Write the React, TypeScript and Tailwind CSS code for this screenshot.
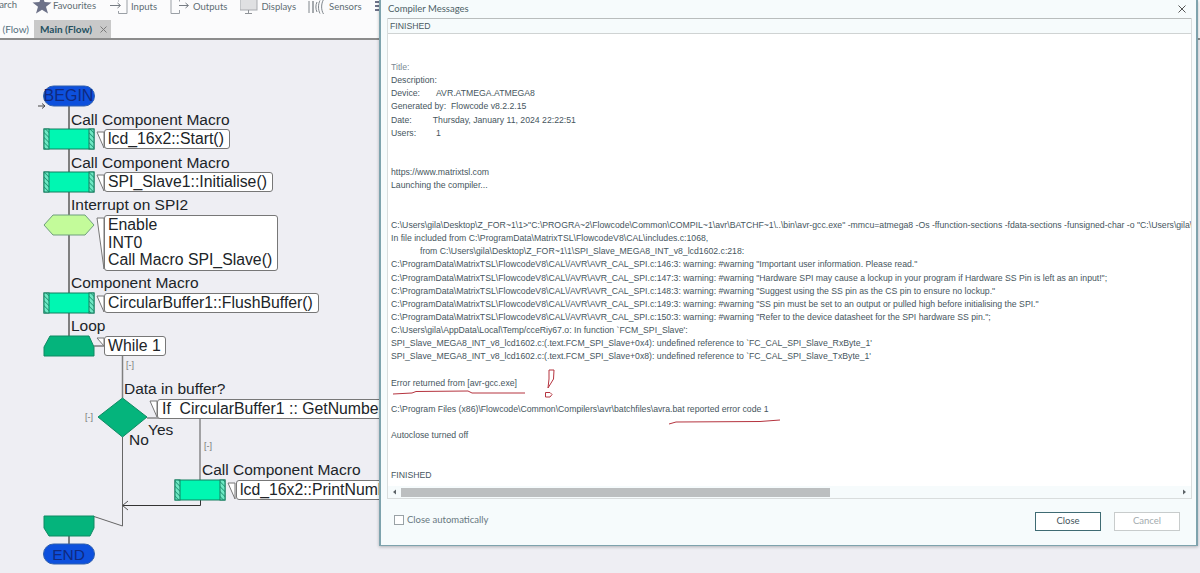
const messageLines = [
  null,
  null,
  "https://www.matrixtsl.com",
  "Launching the compiler...",
  null,
  null,
  'C:\\Users\\gila\\Desktop\\Z_FOR~1\\1>"C:\\PROGRA~2\\Flowcode\\Common\\COMPIL~1\\avr\\BATCHF~1\\..\\bin\\avr-gcc.exe" -mmcu=atmega8 -Os -ffunction-sections -fdata-sections -funsigned-char -o "C:\\Users\\gila\\Desktop\\Z_FOR~1\\1\\SPI_Slave.o"',
  "In file included from C:\\ProgramData\\MatrixTSL\\FlowcodeV8\\CAL\\includes.c:1068,",
  "            from C:\\Users\\gila\\Desktop\\Z_FOR~1\\1\\SPI_Slave_MEGA8_INT_v8_lcd1602.c:218:",
  'C:\\ProgramData\\MatrixTSL\\FlowcodeV8\\CAL\\/AVR\\AVR_CAL_SPI.c:146:3: warning: #warning "Important user information. Please read."',
  'C:\\ProgramData\\MatrixTSL\\FlowcodeV8\\CAL\\/AVR\\AVR_CAL_SPI.c:147:3: warning: #warning "Hardware SPI may cause a lockup in your program if Hardware SS Pin is left as an input!";',
  'C:\\ProgramData\\MatrixTSL\\FlowcodeV8\\CAL\\/AVR\\AVR_CAL_SPI.c:148:3: warning: #warning "Suggest using the SS pin as the CS pin to ensure no lockup."',
  'C:\\ProgramData\\MatrixTSL\\FlowcodeV8\\CAL\\/AVR\\AVR_CAL_SPI.c:149:3: warning: #warning "SS pin must be set to an output or pulled high before initialising the SPI."',
  'C:\\ProgramData\\MatrixTSL\\FlowcodeV8\\CAL\\/AVR\\AVR_CAL_SPI.c:150:3: warning: #warning "Refer to the device datasheet for the SPI hardware SS pin.";',
  "C:\\Users\\gila\\AppData\\Local\\Temp/cceRiy67.o: In function `FCM_SPI_Slave':",
  "SPI_Slave_MEGA8_INT_v8_lcd1602.c:(.text.FCM_SPI_Slave+0x4): undefined reference to `FC_CAL_SPI_Slave_RxByte_1'",
  "SPI_Slave_MEGA8_INT_v8_lcd1602.c:(.text.FCM_SPI_Slave+0x8): undefined reference to `FC_CAL_SPI_Slave_TxByte_1'",
  null,
  "Error returned from [avr-gcc.exe]",
  null,
  "C:\\Program Files (x86)\\Flowcode\\Common\\Compilers\\avr\\batchfiles\\avra.bat reported error code 1",
  null,
  "Autoclose turned off",
  null,
  null,
  "FINISHED",
];

function ToolbarItem({ icon, label, tight }: { icon: React.ReactNode; label: string; tight?: boolean }) {
  return (
    <div className={`flex shrink-0 items-center ${tight ? "gap-[1px]" : "gap-[3px]"}`}>
      {icon}
      <span className="-mt-[2px] text-[9.5px] leading-none text-[#5e6d73]">{label}</span>
    </div>
  );
}

function Toolbar() {
  return (
    <div className="flex h-[20px] shrink-0 items-start overflow-hidden bg-[#fbfbfc] font-['Lato',sans-serif]">
      <span className="-ml-[11px] mr-[15px] text-[9.5px] leading-[10px] text-[#5e6d73]">Search</span>
      <ToolbarItem
        tight
        label="Favourites"
        icon={
          <svg width="20" height="14" viewBox="0 0 20 14">
            <path d="M10 -5 L12.6 2 L19.5 2.4 L14 6.8 L16 13.5 L10 9.8 L4 13.5 L6 6.8 L.5 2.4 L7.4 2 Z" fill="#6d7289" />
          </svg>
        }
      />
      <div className="w-[14px] shrink-0" />
      <ToolbarItem
        label="Inputs"
        icon={
          <svg width="18" height="15" viewBox="0 0 18 15" fill="none" stroke="#9a9fa5">
            <path d="M8.5 .5V1.5M17 -1V13.5H8.5V11" />
            <path d="M0 5.5H10M7.5 3L10.5 5.5L7.5 8" stroke="#777d84" />
          </svg>
        }
      />
      <div className="w-[13px] shrink-0" />
      <ToolbarItem
        label="Outputs"
        icon={
          <svg width="20" height="15" viewBox="0 0 20 15" fill="none" stroke="#9a9fa5">
            <path d="M1 -1V13.5H9.5V10M9.5 -1V1.5" />
            <path d="M9 5.5H18M15.5 3L18.5 5.5L15.5 8" stroke="#777d84" />
          </svg>
        }
      />
      <div className="w-[13px] shrink-0" />
      <ToolbarItem
        label="Displays"
        icon={
          <svg width="18" height="15" viewBox="0 0 18 15">
            <rect x="0" y="-2" width="17" height="12" fill="#dfe0e2" stroke="#a8abaf" />
            <path d="M8.5 10V13M5 13.5H12" stroke="#8f9398" fill="none" />
          </svg>
        }
      />
      <div className="w-[12px] shrink-0" />
      <ToolbarItem
        label="Sensors"
        icon={
          <svg width="18" height="15" viewBox="0 0 18 15" fill="none" stroke="#80868c">
            <path d="M1 1V13" />
            <path d="M5 1V13" strokeWidth="1.4" />
            <path d="M9 2C7.5 5 7.5 9 9 12M12 .5C10 4 10 10 12 13.5M15.5 -.5C13 4 13 10 15.5 14" />
          </svg>
        }
      />
      <div className="w-[13px] shrink-0" />
      <div className="flex w-[6px] shrink-0 flex-col gap-[2px] pt-[1px]">
        <div className="h-[2px] bg-[#6d7289]" />
        <div className="h-[2px] bg-[#6d7289]" />
        <div className="h-[2px] bg-[#6d7289]" />
      </div>
    </div>
  );
}

function TabBar() {
  return (
    <div className="flex h-[20px] shrink-0 items-stretch border-b-2 border-[#8c8c8c] bg-[#fbfbfc] font-['Lato',sans-serif] text-[10px]">
      <div className="flex w-[34px] items-center justify-end overflow-hidden whitespace-nowrap pr-[5px] text-[#55707c]">
        <span>e (Flow)</span>
      </div>
      <div className="flex w-[77px] items-center justify-between bg-[#c9c9c9] pl-[6px] pr-[4px] font-bold text-[#24505f]">
        <span className="whitespace-nowrap">Main (Flow)</span>
        <svg width="7" height="7" viewBox="0 0 7 7" stroke="#7a7a7a" className="shrink-0">
          <path d="M.5 .5L6.5 6.5M6.5 .5L.5 6.5" />
        </svg>
      </div>
    </div>
  );
}

function Call({ x, y }: { x: number; y: number }) {
  return (
    <g>
      <rect x={x} y={y} width="50" height="20" fill="#00f7b2" stroke="#157f60" />
      <rect x={x} y={y} width="5" height="20" fill="url(#hatch)" stroke="#157f60" />
      <rect x={x + 45} y={y} width="5" height="20" fill="url(#hatch)" stroke="#157f60" />
    </g>
  );
}

function Tail({ x, y, bottom }: { x: number; y: number; bottom: number }) {
  return <path d={`M${x} ${y}H${x + 7}V${bottom}Z`} fill="#fff" stroke="#777" />;
}

function Collapse({ className }: { className: string }) {
  return <span className={`absolute text-[9px] leading-none text-[#777] ${className}`}>[-]</span>;
}

function Label({ className, children }: { className: string; children: React.ReactNode }) {
  return <span className={`absolute whitespace-nowrap text-[15.5px] leading-none ${className}`}>{children}</span>;
}

function Bubble({ className, children }: { className: string; children: React.ReactNode }) {
  return (
    <div className={`absolute overflow-hidden whitespace-pre rounded-[3px] border border-[#777] bg-white pl-[3px] text-[15.8px] leading-[18px] ${className}`}>
      {children}
    </div>
  );
}

function FlowChart() {
  return (
    <div className="relative flex-1 overflow-hidden bg-[#eeeef3] font-['Liberation_Sans',sans-serif] text-[#202428]">
      <svg width="400" height="533" viewBox="0 40 400 533" className="absolute left-0 top-0">
        <defs>
          <pattern id="hatch" width="3.5" height="3.5" patternUnits="userSpaceOnUse" patternTransform="rotate(-45)">
            <rect width="3.5" height="3.5" fill="#6fe8c4" />
            <path d="M0 0V3.5" stroke="#128a68" strokeWidth="1.4" />
          </pattern>
        </defs>
        <g fill="none" stroke="#7f7f7f" strokeWidth="1.5">
          <path d="M69 106V336" strokeWidth="2" />
          <path d="M122.5 355V398" />
          <path d="M147 418H200V480" stroke="#555" strokeWidth="1" />
          <path d="M200.5 500V505.5H123" stroke="#333" strokeWidth="1" />
          <path d="M122.5 437V526L94 516.5" strokeWidth="1" stroke="#666" />
          <path d="M128 501L122.5 505.5L128 510" stroke="#555" strokeWidth="1" />
          <path d="M69 536V544" strokeWidth="2" />
          <path d="M94 346H104" stroke="#444" strokeWidth="1" />
          <path d="M38 106H44M42 103.5L45 106L42 108.5" stroke="#444" strokeWidth="1" />
        </g>
        <rect x="43.5" y="86" width="51" height="20" rx="10" fill="#0d50dd" stroke="#2f5fae" />
        <Call x={44} y={129} />
        <Tail x={97} y={132} bottom={148} />
        <Call x={44} y={172} />
        <Tail x={97} y={175} bottom={191} />
        <path d="M44 225L53 215H85L94 225L85 235H53Z" fill="#c3fb9a" stroke="#6f9f7e" />
        <Tail x={97} y={218} bottom={269} />
        <Call x={44} y={293} />
        <Tail x={97} y={296} bottom={312} />
        <path d="M44 356V347L50 336H89L94 347V356Z" fill="#05b47c" stroke="#0f8a63" />
        <Tail x={97} y={338} bottom={346} />
        <path d="M98 417L122.5 398L147 417L122.5 437Z" fill="#05b47c" stroke="#0f8a63" />
        <Tail x={150} y={401} bottom={417} />
        <Call x={175} y={480} />
        <Tail x={228} y={483} bottom={499} />
        <path d="M44 516H94V528L90 536H49L44 528Z" fill="#05b47c" stroke="#0f8a63" />
        <rect x="43.5" y="544" width="51" height="20" rx="10" fill="#0d50dd" stroke="#2f5fae" />
      </svg>

      <Label className="left-[43px] top-[48px] w-[51px] text-center !text-[16px] text-[#10297f]">BEGIN</Label>
      <Label className="left-[71px] top-[72px]">Call Component Macro</Label>
      <Bubble className="left-[104px] top-[89px] h-[20px] w-[126px]">lcd_16x2::Start()</Bubble>
      <Label className="left-[71px] top-[115px]">Call Component Macro</Label>
      <Bubble className="left-[104px] top-[132px] h-[20px] w-[169px]">SPI_Slave1::Initialise()</Bubble>
      <Label className="left-[71px] top-[157px]">Interrupt on SPI2</Label>
      <Bubble className="left-[104px] top-[175px] h-[56px] w-[174px]">
        <div className="leading-[17.6px]">Enable</div>
        <div className="leading-[17.6px]">INT0</div>
        <div className="leading-[17.6px]">Call Macro SPI_Slave()</div>
      </Bubble>
      <Label className="left-[71px] top-[235px]">Component Macro</Label>
      <Bubble className="left-[104px] top-[253px] h-[20px] w-[215px]">CircularBuffer1::FlushBuffer()</Bubble>
      <Label className="left-[71px] top-[278px]">Loop</Label>
      <Bubble className="left-[104px] top-[296px] h-[20px] w-[62px]">While 1</Bubble>
      <Collapse className="left-[126px] top-[321px]" />
      <Label className="left-[124px] top-[341px]">Data in buffer?</Label>
      <Collapse className="left-[85px] top-[373px]" />
      <Bubble className="left-[157px] top-[359px] h-[20px] w-[240px] !pl-[4px]">If  CircularBuffer1 :: GetNumberOfBytes</Bubble>
      <Label className="left-[148px] top-[382px]">Yes</Label>
      <Label className="left-[129px] top-[392px]">No</Label>
      <Collapse className="left-[204px] top-[402px]" />
      <Label className="left-[202px] top-[422px]">Call Component Macro</Label>
      <Bubble className="left-[236px] top-[440px] h-[20px] w-[160px]">lcd_16x2::PrintNumber()</Bubble>
      <Label className="left-[43px] top-[507px] w-[51px] text-center text-[#10297f]">END</Label>
    </div>
  );
}

function CompilerDialog() {
  return (
    <div className="absolute left-[379px] top-0 flex h-[546px] w-[819px] flex-col border-x-2 border-b border-[#7ea3ad] bg-[#f6fbfc] pl-[6px] pr-[4px] font-['Lato',sans-serif] shadow-[0_1px_3px_rgba(0,0,0,0.25)]">
      <div className="flex h-[18px] shrink-0 items-center justify-between pl-[1px] pr-[6px]">
        <span className="text-[9.5px] text-[#4d5f66]">Compiler Messages</span>
        <svg width="8" height="8" viewBox="0 0 8 8" stroke="#555">
          <path d="M.5 .5L7.5 7.5M7.5 .5L.5 7.5" />
        </svg>
      </div>
      <div className="flex h-[481px] shrink-0 flex-col border border-t-0 border-[#d9dddd] bg-white font-['Liberation_Sans',sans-serif] text-[8.7px]">
        <div className="h-[16px] shrink-0 border-y border-y-[#cfd3d3] border-t-[#b9bdbd] bg-[#f6fbfc] pl-[2px] leading-[14px] text-[#4a5a62]">FINISHED</div>
        <div className="min-h-0 flex-1 overflow-hidden whitespace-pre pl-[3px] pt-[27px] leading-[13.16px] text-[#46565e]">
          <div className="text-[#7a8a94]">Title:</div>
          <div>Description:</div>
          <div>Device:<span className="ml-[16px]">AVR.ATMEGA.ATMEGA8</span></div>
          <div>Generated by:<span className="ml-[5px]">Flowcode v8.2.2.15</span></div>
          <div>Date:<span className="ml-[21px]">Thursday, January 11, 2024 22:22:51</span></div>
          <div>Users:<span className="ml-[20px]">1</span></div>
          {messageLines.map((line, index) => (
            <div className="h-[13.16px]" key={index}>
              {line}
            </div>
          ))}
        </div>
        <div className="flex h-[12px] shrink-0 items-center bg-[#f6fbfc]">
          <svg width="13" height="12" viewBox="0 0 13 12" className="shrink-0" fill="#5d6468">
            <path d="M5 6L8 3.5V8.5Z" />
          </svg>
          <div className="h-[9px] w-[429px] bg-[#bcbfc0]" />
          <div className="flex-1" />
          <svg width="14" height="12" viewBox="0 0 14 12" className="shrink-0" fill="#5d6468">
            <path d="M9 6L6 3.5V8.5Z" />
          </svg>
        </div>
      </div>
      <div className="flex flex-1 items-center justify-between pb-[1px] pl-[7px] pr-[12px]">
        <label className="-mt-[3px] flex items-center gap-[3px] text-[9.5px] text-[#687880]">
          <span className="h-[10px] w-[10px] border border-[#9aa2a6] bg-white" />
          Close automatically
        </label>
        <div className="flex gap-[13px] text-[9.5px]">
          <button type="button" className="h-[19px] w-[66px] border border-[#3f6b73] bg-white text-[#44555c]">
            Close
          </button>
          <button type="button" className="h-[19px] w-[66px] border border-[#c8cccc] bg-white text-[#a3abae]">
            Cancel
          </button>
        </div>
      </div>
    </div>
  );
}

export default function App() {
  return (
    <div className="relative flex h-[573px] w-[1200px] flex-col overflow-hidden bg-[#eeeef3]">
      <Toolbar />
      <TabBar />
      <FlowChart />
      <CompilerDialog />
      {/* red pen marks drawn over the dialog */}
      <svg width="1200" height="573" viewBox="0 0 1200 573" fill="none" stroke="#b5343f" className="pointer-events-none absolute left-0 top-0">
        <path d="M393 394L412 393L416 391.5L468 391L472 393L525 393" />
        <path d="M549 370H554L553.500 379L548 388L549 379Z" />
        <path d="M545.500 392.500H550L552 394.500L550 397H545.500Z" />
        <path d="M669 424L676 422L760 421.500L780 420" />
      </svg>
    </div>
  );
}
